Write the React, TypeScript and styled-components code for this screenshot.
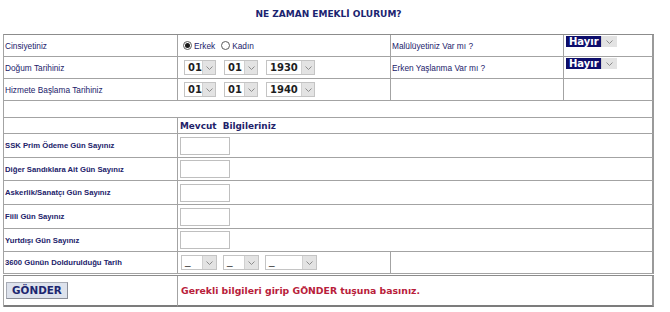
import React from "react";
import styled, { createGlobalStyle } from "styled-components";

const GlobalStyle = createGlobalStyle`
  body {
    margin: 0;
    background: #ffffff;
  }
`;

const navy = "#22226a";
const line = "#a3a3a3";

const Page = styled.div`
  width: 651px;
  padding-left: 3px;
`;

const Title = styled.h1`
  margin: 0;
  height: 34px;
  box-sizing: border-box;
  padding-top: 8px;
  line-height: 12px;
  text-align: center;
  font-family: "DejaVu Sans", Verdana, sans-serif;
  font-size: 9px;
  font-weight: bold;
  color: #1b2470;
`;

const FormGrid = styled.div<{ $rows: string; $gapTop?: number }>`
  display: grid;
  grid-template-columns: 174px 213px 173px 90px;
  grid-template-rows: ${(p) => p.$rows};
  border-top: 1px solid #8c8c8c;
  border-left: 1px solid ${line};
  margin-top: ${(p) => p.$gapTop ?? 0}px;
`;

const Cell = styled.div<{ $span?: number; $pad?: number; $top?: boolean; $last?: boolean; $bottom?: boolean }>`
  grid-column: span ${(p) => p.$span ?? 1};
  box-sizing: border-box;
  display: flex;
  align-items: ${(p) => (p.$top ? "flex-start" : "center")};
  padding-left: ${(p) => p.$pad ?? 0}px;
  padding-top: ${(p) => (p.$top ? 1 : 0)}px;
  border-right: ${(p) => (p.$last ? "2px solid #9a9a9a" : `1px solid ${line}`)};
  border-bottom: ${(p) => (p.$bottom ? "2px solid #7c7c7c" : `1px solid ${line}`)};
  min-width: 0;
`;

const Label = styled.span<{ $bold?: boolean }>`
  font-family: "Liberation Sans", Arial, sans-serif;
  font-size: ${(p) => (p.$bold ? "7.7px" : "8.3px")};
  font-weight: ${(p) => (p.$bold ? "bold" : "normal")};
  color: ${navy};
  white-space: nowrap;
`;

const SectionHead = styled.span`
  font-family: "DejaVu Sans", Verdana, sans-serif;
  font-size: 8.9px;
  font-weight: bold;
  color: ${navy};
  white-space: pre;
`;

const RadioGroup = styled.div`
  display: flex;
  align-items: center;
`;

const Radio = styled.span<{ $checked?: boolean }>`
  width: 9px;
  height: 9px;
  box-sizing: border-box;
  border: 1px solid #5c5c5c;
  border-radius: 50%;
  background: #fff;
  display: inline-flex;
  align-items: center;
  justify-content: center;
  margin-right: 2px;
  &::after {
    content: "";
    width: 5px;
    height: 5px;
    border-radius: 50%;
    background: ${(p) => (p.$checked ? "#1a1a1a" : "transparent")};
  }
`;

const RadioText = styled(Label)`
  margin-right: 6px;
`;

const SelectRow = styled.div<{ $gap: number }>`
  display: flex;
  align-items: center;
  gap: ${(p) => p.$gap}px;
`;

const SelectBox = styled.span<{ $h: number }>`
  display: inline-flex;
  box-sizing: border-box;
  height: ${(p) => p.$h}px;
  border: 1px solid #c4c4c4;
  background: #fff;
`;

const SelectValue = styled.span<{ $dark?: boolean }>`
  flex: 1;
  display: flex;
  align-items: center;
  padding-left: 3px;
  font-family: "DejaVu Sans", Verdana, sans-serif;
  font-size: 10px;
  font-weight: bold;
  color: ${(p) => (p.$dark ? "#ffffff" : "#1e1e1e")};
  background: ${(p) => (p.$dark ? "#0d0d6b" : "transparent")};
`;

const Underscore = styled.span`
  font-family: "Liberation Sans", Arial, sans-serif;
  font-size: 10px;
  color: #222;
  padding-left: 3px;
  line-height: 12px;
`;

const SelectArrow = styled.span<{ $w: number }>`
  width: ${(p) => p.$w}px;
  display: flex;
  align-items: center;
  justify-content: center;
  background: #e3e3e3;
  border-left: 1px solid #d0d0d0;
`;

const TextInput = styled.input`
  width: 50px;
  height: 18px;
  box-sizing: border-box;
  border: 1px solid #bfbfbf;
  padding: 0;
  margin: 0;
  background: #fff;
`;

const SendButton = styled.button`
  margin-left: 2px;
  width: 62px;
  height: 17px;
  box-sizing: border-box;
  padding: 0;
  border: 1px solid #a8acb6;
  border-right-color: #8a8e98;
  border-bottom-color: #8a8e98;
  background: #dde2ec;
  font-family: "DejaVu Sans", Verdana, sans-serif;
  font-size: 10.4px;
  font-weight: bold;
  color: #1c2670;
  line-height: 15px;
`;

const Message = styled.span`
  font-family: "DejaVu Sans", Verdana, sans-serif;
  font-size: 9.3px;
  font-weight: bold;
  color: #b8203a;
  white-space: nowrap;
`;

const Chevron = () => (
  <svg width="7" height="4" viewBox="0 0 7 4">
    <polyline points="0.5,0.5 3.5,3.5 6.5,0.5" fill="none" stroke="#8c8c8c" strokeWidth="1" />
  </svg>
);

const DateSelect = ({ value, width }: { value: string; width: number }) => (
  <SelectBox $h={15} style={{ width }}>
    <SelectValue>{value}</SelectValue>
    <SelectArrow $w={12}>
      <Chevron />
    </SelectArrow>
  </SelectBox>
);

const EmptySelect = ({ width }: { width: number }) => (
  <SelectBox $h={15} style={{ width }}>
    <Underscore style={{ flex: 1 }}>_</Underscore>
    <SelectArrow $w={13}>
      <Chevron />
    </SelectArrow>
  </SelectBox>
);

const YesNoSelect = () => (
  <SelectBox $h={11} style={{ width: 51, border: "none" }}>
    <SelectValue $dark>Hayır</SelectValue>
    <SelectArrow $w={15}>
      <Chevron />
    </SelectArrow>
  </SelectBox>
);

const counts = [
  "SSK Prim Ödeme Gün Sayınız",
  "Diğer Sandıklara Ait Gün Sayınız",
  "Askerlik/Sanatçı Gün Sayınız",
  "Fiili Gün Sayınız",
  "Yurtdışı Gün Sayınız",
];

export default function App() {
  return (
    <>
      <GlobalStyle />
      <Page>
        <Title>NE ZAMAN EMEKLİ OLURUM?</Title>
        <FormGrid $rows="22px 22px 22px 17px 16px 24px 23px 24px 24px 23px 22px">
          <Cell $pad={1}>
            <Label>Cinsiyetiniz</Label>
          </Cell>
          <Cell $pad={5}>
            <RadioGroup>
              <Radio $checked />
              <RadioText>Erkek</RadioText>
              <Radio />
              <RadioText>Kadın</RadioText>
            </RadioGroup>
          </Cell>
          <Cell $pad={1}>
            <Label>Malülüyetiniz Var mı ?</Label>
          </Cell>
          <Cell $pad={2} $top $last>
            <YesNoSelect />
          </Cell>

          <Cell $pad={1}>
            <Label>Doğum Tarihiniz</Label>
          </Cell>
          <Cell $pad={6}>
            <SelectRow $gap={8}>
              <DateSelect value="01" width={32} />
              <DateSelect value="01" width={34} />
              <DateSelect value="1930" width={49} />
            </SelectRow>
          </Cell>
          <Cell $pad={1}>
            <Label>Erken Yaşlanma Var mı ?</Label>
          </Cell>
          <Cell $pad={2} $top $last>
            <YesNoSelect />
          </Cell>

          <Cell $pad={1}>
            <Label>Hizmete Başlama Tarihiniz</Label>
          </Cell>
          <Cell $pad={6}>
            <SelectRow $gap={8}>
              <DateSelect value="01" width={32} />
              <DateSelect value="01" width={34} />
              <DateSelect value="1940" width={49} />
            </SelectRow>
          </Cell>
          <Cell />
          <Cell $last />

          <Cell $span={4} $last />

          <Cell />
          <Cell $span={3} $pad={2} $last>
            <SectionHead>{"Mevcut  Bilgileriniz"}</SectionHead>
          </Cell>

          {counts.map((c) => (
            <React.Fragment key={c}>
              <Cell $pad={1}>
                <Label $bold>{c}</Label>
              </Cell>
              <Cell $span={3} $pad={2} $last>
                <TextInput type="text" />
              </Cell>
            </React.Fragment>
          ))}

          <Cell $pad={1}>
            <Label $bold>3600 Günün Doldurulduğu Tarih</Label>
          </Cell>
          <Cell $pad={3}>
            <SelectRow $gap={6}>
              <EmptySelect width={36} />
              <EmptySelect width={36} />
              <EmptySelect width={52} />
            </SelectRow>
          </Cell>
          <Cell $span={2} $last />
        </FormGrid>

        <FormGrid $rows="31px" $gapTop={1}>
          <Cell $bottom>
            <SendButton type="button">GÖNDER</SendButton>
          </Cell>
          <Cell $span={3} $pad={3} $last $bottom>
            <Message>Gerekli bilgileri girip GÖNDER tuşuna basınız.</Message>
          </Cell>
        </FormGrid>
      </Page>
    </>
  );
}
